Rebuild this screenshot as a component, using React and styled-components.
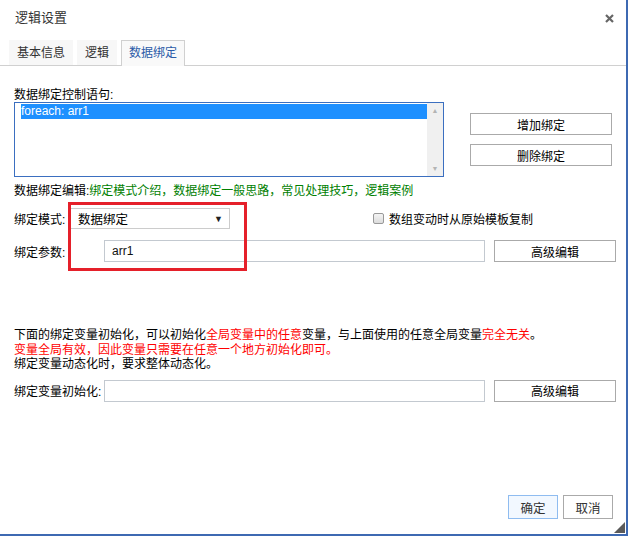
import React from 'react'
import styled, { createGlobalStyle } from 'styled-components'

const Global = createGlobalStyle`
  html, body {
    margin: 0;
    padding: 0;
    background: #fff;
  }
  body {
    font-family: "Liberation Sans", "Noto Sans CJK SC", sans-serif;
    font-size: 12px;
    color: #000;
  }
`

const App = () => {
  return (
    <>
      <Global />
      <Dialog>
        <Header>
          <Title>逻辑设置</Title>
          <Close>
            <svg width="9" height="9" viewBox="0 0 9 9">
              <path d="M1 1 L8 8 M8 1 L1 8" stroke="#666" strokeWidth="2.2" />
            </svg>
          </Close>
        </Header>

        <Tabs>
          <Tab>基本信息</Tab>
          <Tab>逻辑</Tab>
          <Tab active>数据绑定</Tab>
        </Tabs>

        <Body>
          <Label>数据绑定控制语句:</Label>
          <ListRow>
            <ListBox>
              <Items>
                <Item>foreach: arr1</Item>
              </Items>
              <ScrollBar>
                <Arrow>▲</Arrow>
                <Arrow>▼</Arrow>
              </ScrollBar>
            </ListBox>
            <SideButtons>
              <Button>增加绑定</Button>
              <Button>删除绑定</Button>
            </SideButtons>
          </ListRow>

          <EditLine>
            数据绑定编辑:
            <Green>绑定模式介绍，数据绑定一般思路，常见处理技巧，逻辑案例</Green>
          </EditLine>

          <BindArea>
            <ModeRow>
              <RowLabel>绑定模式:</RowLabel>
              <Select>
                <span>数据绑定</span>
                <Caret>▼</Caret>
              </Select>
              <Check>
                <Box />
                数组变动时从原始模板复制
              </Check>
            </ModeRow>
            <FieldRow>
              <RowLabel>绑定参数:</RowLabel>
              <Input>arr1</Input>
              <Button wide>高级编辑</Button>
            </FieldRow>
            <Highlight />
          </BindArea>

          <Notes>
            <p>
              下面的绑定变量初始化，可以初始化<Red>全局变量中的任意</Red>变量，与上面使用的任意全局变量<Red>完全无关</Red>。
            </p>
            <p>
              <Red>变量全局有效，因此变量只需要在任意一个地方初始化即可。</Red>
            </p>
            <p>绑定变量动态化时，要求整体动态化。</p>
          </Notes>

          <FieldRow>
            <RowLabel>绑定变量初始化:</RowLabel>
            <Input />
            <Button wide>高级编辑</Button>
          </FieldRow>
        </Body>

        <Footer>
          <Button primary small>确定</Button>
          <Button small>取消</Button>
        </Footer>
        <Grip />
      </Dialog>
    </>
  )
}

export default App

const Dialog = styled.div`
  position: relative;
  width: 626px;
  height: 534px;
  border-right: 2px solid #3d69b2;
  border-bottom: 2px solid #3d69b2;
  display: flex;
  flex-direction: column;
  background: #fff;
`

const Header = styled.div`
  height: 36px;
  display: flex;
  align-items: center;
  justify-content: space-between;
  padding: 0 12px 0 15px;
`

const Title = styled.div`
  font-size: 13px;
  color: #333;
  line-height: 16px;
`

const Close = styled.div`
  display: flex;
  align-items: center;
  margin-top: 1px;
`

const Tabs = styled.div`
  margin-top: 4px;
  display: flex;
  gap: 4px;
  padding-left: 9px;
  border-bottom: 1px solid #d0d0d0;
  height: 25px;
`

const Tab = styled.div`
  padding: 0 7px;
  line-height: 24px;
  font-size: 12px;
  background: ${p => (p.active ? '#f9f9f9' : '#f7f7f7')};
  color: ${p => (p.active ? '#2b5ba8' : '#333')};
  border: 1px solid ${p => (p.active ? '#d0d0d0' : 'transparent')};
  border-bottom: none;
  box-sizing: border-box;
  margin-bottom: ${p => (p.active ? '-1px' : '0')};
  height: ${p => (p.active ? '26px' : '25px')};
`

const Body = styled.div`
  padding: 23px 0 0 14px;
  display: flex;
  flex-direction: column;
`

const Label = styled.div`
  line-height: 13px;
  height: 13px;
`

const ListRow = styled.div`
  display: flex;
  align-items: flex-start;
  gap: 26px;
`

const ListBox = styled.div`
  width: 430px;
  height: 75px;
  box-sizing: border-box;
  border: 1px solid #3b6fc0;
  display: flex;
`

const Items = styled.div`
  flex: 1;
  padding: 1px 0 0 6px;
`

const Item = styled.div`
  background: #1e90ff;
  color: #fff;
  height: 15px;
  line-height: 15px;
  font-size: 12px;
`

const ScrollBar = styled.div`
  width: 16px;
  background: #f0f0f0;
  display: flex;
  flex-direction: column;
  justify-content: space-between;
  align-items: center;
  padding: 4px 0 3px;
`

const Arrow = styled.span`
  font-size: 7px;
  line-height: 8px;
  color: #b4b4b4;
`

const SideButtons = styled.div`
  display: flex;
  flex-direction: column;
  gap: 9px;
  margin-top: 11px;
`

const Button = styled.div`
  box-sizing: border-box;
  width: ${p => (p.small ? '50px' : p.wide ? '122px' : '142px')};
  height: ${p => (p.small ? '24px' : '22px')};
  border: 1px solid ${p => (p.primary ? '#8fbcf0' : '#aaa')};
  background: ${p => (p.primary ? '#f2f8ff' : '#fff')};
  color: ${p => (p.small ? '#333' : '#000')};
  display: flex;
  align-items: center;
  justify-content: center;
  font-size: ${p => (p.small ? '12.5px' : '12px')};
`

const EditLine = styled.div`
  margin-top: 7px;
  line-height: 14px;
`

const Green = styled.span`
  color: #008000;
`

const Red = styled.span`
  color: #ff0000;
`

const BindArea = styled.div`
  position: relative;
  display: flex;
  flex-direction: column;
  gap: 11px;
  margin-top: 10px;
`

const ModeRow = styled.div`
  display: flex;
  align-items: center;
  height: 21px;
`

const RowLabel = styled.div`
  width: 90px;
  flex-shrink: 0;
  ${ModeRow} & {
    width: 54px;
  }
`

const Select = styled.div`
  box-sizing: border-box;
  width: 162px;
  height: 21px;
  border: 1px solid #ccc;
  display: flex;
  align-items: center;
  justify-content: space-between;
  padding: 0 6px 0 9px;
  font-size: 12.5px;
`

const Caret = styled.span`
  font-size: 9px;
  color: #222;
`

const Check = styled.label`
  margin-left: 143px;
  display: flex;
  align-items: center;
  gap: 5px;
`

const Box = styled.span`
  width: 11px;
  height: 11px;
  box-sizing: border-box;
  border: 1px solid #999;
  border-radius: 2px;
  background: linear-gradient(#f4f4f4, #dcdcdc);
`

const FieldRow = styled.div`
  display: flex;
  align-items: center;
  height: 22px;
`

const Input = styled.div`
  box-sizing: border-box;
  width: 381px;
  height: 22px;
  border: 1px solid #c3c9d0;
  padding-left: 7px;
  line-height: 20px;
  margin-right: 9px;
  color: #111;
`

const Highlight = styled.div`
  position: absolute;
  left: 54px;
  top: -6px;
  width: 179px;
  height: 69px;
  box-sizing: border-box;
  border: 3px solid #e5202a;
  pointer-events: none;
`

const Notes = styled.div`
  margin-top: 66px;
  margin-bottom: 8px;
  p {
    margin: 0;
    line-height: 14.5px;
  }
`

const Footer = styled.div`
  margin-top: auto;
  margin-bottom: 15px;
  display: flex;
  justify-content: flex-end;
  gap: 5px;
  padding-right: 13px;
`

const Grip = styled.div`
  position: absolute;
  right: 1px;
  bottom: 1px;
  width: 0;
  height: 0;
  border-left: 11px solid transparent;
  border-bottom: 11px solid #5a5a5a;
`
